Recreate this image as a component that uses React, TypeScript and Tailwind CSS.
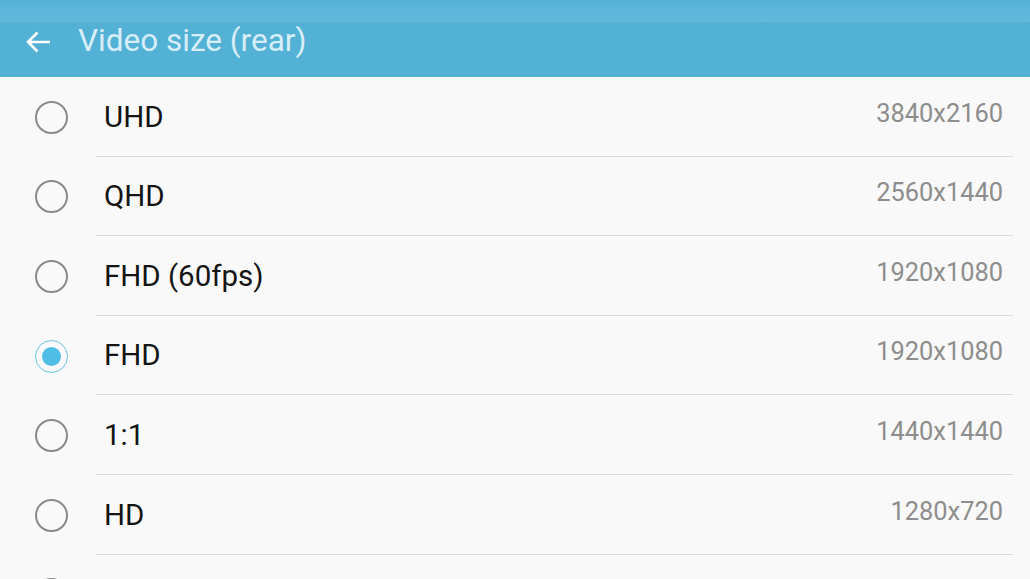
import React from "react";

const rows = [
  { label: "UHD", value: "3840x2160", selected: false },
  { label: "QHD", value: "2560x1440", selected: false },
  { label: "FHD (60fps)", value: "1920x1080", selected: false },
  { label: "FHD", value: "1920x1080", selected: true },
  { label: "1:1", value: "1440x1440", selected: false },
  { label: "HD", value: "1280x720", selected: false },
  { label: "", value: "", selected: false },
];

function Radio({ selected }: { selected: boolean }) {
  if (selected) {
    return (
      <div className="w-[33px] h-[33px] rounded-full border-[1.5px] border-[#63c1e4] flex items-center justify-center">
        <div className="w-[19px] h-[19px] rounded-full bg-[#4fbde6]" />
      </div>
    );
  }
  return <div className="w-[33px] h-[33px] rounded-full border-[2px] border-[#8a8a8a]" />;
}

export default function App() {
  return (
    <div className="w-[1030px] h-[579px] overflow-hidden bg-[#f9f9f9]" style={{ fontFamily: "Roboto, 'Noto Sans', sans-serif" }}>
      <div className="h-[77px] bg-[#53b1d5] flex flex-col">
        <div className="h-[22px] bg-gradient-to-b from-[#56b3d7] to-[#62b9db]" />
        <div className="flex-1 flex items-center">
          <svg className="ml-[25px] mt-[-15px]" width="27" height="24" viewBox="0 0 27 24" fill="none">
            <path d="M25 12H3M12.5 2.5L3 12l9.5 9.5" stroke="#ffffff" strokeWidth="2.6" strokeLinecap="butt" strokeLinejoin="miter" />
          </svg>
          <span className="ml-[26px] mt-[-17px] text-[31.5px] text-[#d6eef8] leading-none">Video size (rear)</span>
        </div>
      </div>
      <div>
        {rows.map((r, i) => (
          <div key={i} className="flex h-[79.6px]">
            <div className="w-[96px] flex items-center justify-center pl-[6px] pt-[1px]">
              <Radio selected={r.selected} />
            </div>
            <div className="flex-1 flex items-center border-b border-[#dcdcdc] mr-[17px]">
              <span className="ml-[8px] text-[29.5px] leading-none text-[#141414] pt-[2px]">{r.label}</span>
              <span className="ml-auto mr-[10px] text-[25.4px] leading-none text-[#8d8d8d] mb-[6px]">{r.value}</span>
            </div>
          </div>
        ))}
      </div>
    </div>
  );
}
